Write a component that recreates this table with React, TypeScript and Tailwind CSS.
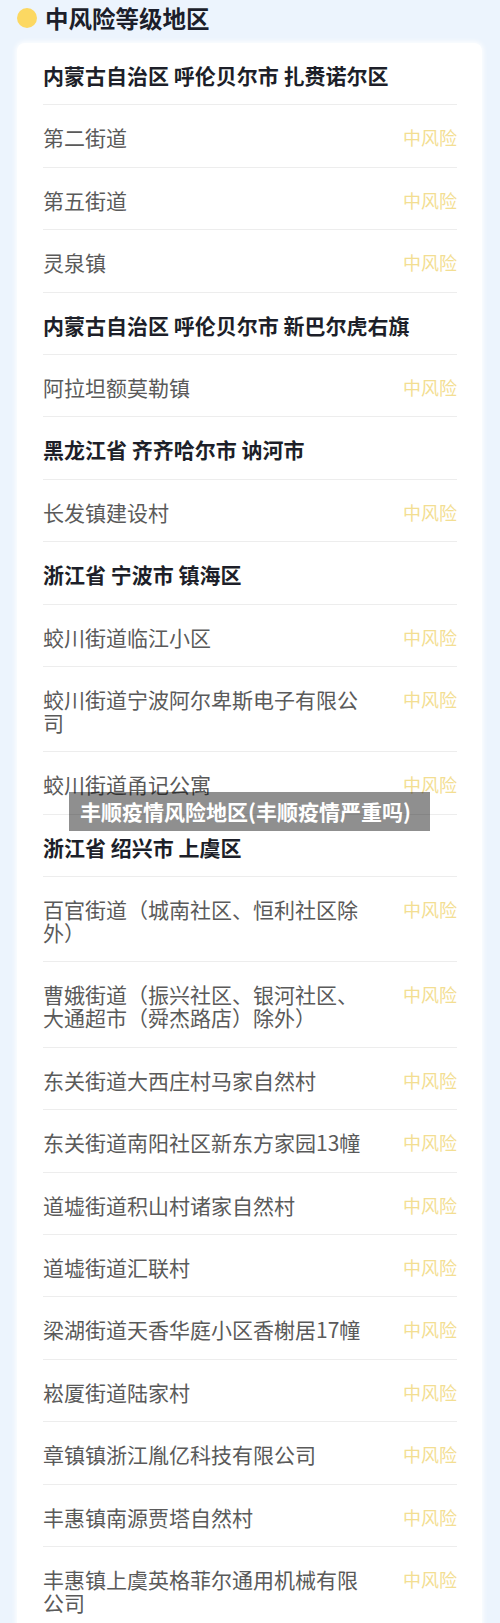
type Row = { kind: 'group'; text: string } | { kind: 'item'; text: string }

const rows: Row[] = [
  { kind: 'group', text: '内蒙古自治区 呼伦贝尔市 扎赉诺尔区' },
  { kind: 'item', text: '第二街道' },
  { kind: 'item', text: '第五街道' },
  { kind: 'item', text: '灵泉镇' },
  { kind: 'group', text: '内蒙古自治区 呼伦贝尔市 新巴尔虎右旗' },
  { kind: 'item', text: '阿拉坦额莫勒镇' },
  { kind: 'group', text: '黑龙江省 齐齐哈尔市 讷河市' },
  { kind: 'item', text: '长发镇建设村' },
  { kind: 'group', text: '浙江省 宁波市 镇海区' },
  { kind: 'item', text: '蛟川街道临江小区' },
  { kind: 'item', text: '蛟川街道宁波阿尔卑斯电子有限公司' },
  { kind: 'item', text: '蛟川街道甬记公寓' },
  { kind: 'group', text: '浙江省 绍兴市 上虞区' },
  { kind: 'item', text: '百官街道（城南社区、恒利社区除外）' },
  { kind: 'item', text: '曹娥街道（振兴社区、银河社区、大通超市（舜杰路店）除外）' },
  { kind: 'item', text: '东关街道大西庄村马家自然村' },
  { kind: 'item', text: '东关街道南阳社区新东方家园13幢' },
  { kind: 'item', text: '道墟街道积山村诸家自然村' },
  { kind: 'item', text: '道墟街道汇联村' },
  { kind: 'item', text: '梁湖街道天香华庭小区香榭居17幢' },
  { kind: 'item', text: '崧厦街道陆家村' },
  { kind: 'item', text: '章镇镇浙江胤亿科技有限公司' },
  { kind: 'item', text: '丰惠镇南源贾塔自然村' },
  { kind: 'item', text: '丰惠镇上虞英格菲尔通用机械有限公司' },
]

export default function App() {
  return (
    <div
      className="relative min-h-screen bg-[#ecf4fd] px-[17px] pt-[3px] pb-10"
      style={{ fontFamily: '"Noto Sans CJK SC", "Noto Sans", sans-serif' }}
    >
      {/* Section title */}
      <div className="flex h-[30px] items-center gap-[8px]">
        <span className="h-[20px] w-[20px] rounded-full bg-[#fcd862]" />
        <h1 className="text-[23.5px] leading-[30px] font-bold text-[#1c1f2b]">中风险等级地区</h1>
      </div>

      {/* List card */}
      <div className="mt-[10px] w-[465px] rounded-[8px] bg-white px-[25px] pl-[26px] shadow-[0_0_4px_2px_rgba(255,255,255,0.8)]">
        {rows.map((row, i) => (
          <div
            key={i}
            className="flex items-start justify-between border-b border-[#ededed] pt-[21px] pb-[17.4px]"
          >
            {row.kind === 'group' ? (
              <p className="text-[21px] leading-[23px] font-bold text-[#1d1f29]">{row.text}</p>
            ) : (
              <>
                <p className="w-[328px] text-[21px] leading-[23px] text-[#5a5a5a]">{row.text}</p>
                <span className="text-[18px] leading-[23px] text-[#f3de92]">中风险</span>
              </>
            )}
          </div>
        ))}
      </div>

      {/* Caption overlay */}
      <div className="absolute top-[792px] left-[69px] flex h-[39px] w-[361px] items-center bg-[rgba(0,0,0,0.44)] pl-[11px]">
        <span className="text-[21px] leading-none font-bold whitespace-nowrap text-white">
          丰顺疫情风险地区(丰顺疫情严重吗)
        </span>
      </div>
    </div>
  )
}
